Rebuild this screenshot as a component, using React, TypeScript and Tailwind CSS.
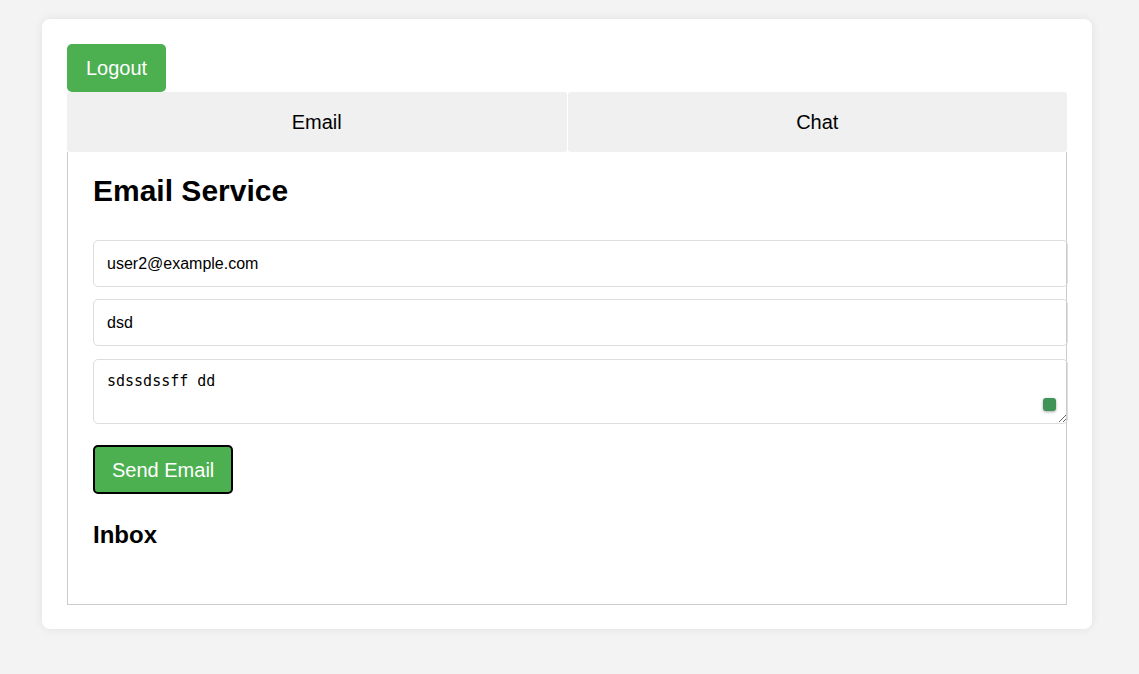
import { useState } from "react";

export default function App() {
  const [tab, setTab] = useState("email");
  const [to, setTo] = useState("user2@example.com");
  const [subject, setSubject] = useState("dsd");
  const [body, setBody] = useState("sdssdssff dd");

  return (
    <div className="min-h-[674px] bg-[#f3f3f3] pt-[19px] font-['Liberation_Sans',Arial,sans-serif] text-black">
      <div className="ml-[42px] w-[1050px] rounded-lg bg-white px-[25px] pt-[25px] pb-[24px] shadow-[0_0_10px_rgba(0,0,0,0.08)]">
        {/* Top: logout */}
        <button className="h-[48px] rounded-[5px] bg-[#4caf50] px-[19px] text-[20px] leading-[23px] text-white">
          Logout
        </button>

        {/* Tabs */}
        <div className="flex gap-px">
          <button
            onClick={() => setTab("email")}
            className="h-[60px] flex-1 rounded-[3px] bg-[#f0f0f0] text-[20px]"
          >
            Email
          </button>
          <button
            onClick={() => setTab("chat")}
            className="h-[60px] flex-1 rounded-[3px] bg-[#f0f0f0] text-[20px]"
          >
            Chat
          </button>
        </div>

        {/* Panel */}
        <div className="border border-t-0 border-[#cccccc] px-[25px] pt-[22px] pb-[55px]">
          {tab === "email" ? (
            <>
              <h2 className="mb-[32px] text-[30px] font-bold leading-[34px]">Email Service</h2>
              <div className="flex flex-col">
                <input
                  value={to}
                  onChange={(e) => setTo(e.target.value)}
                  className="h-[47px] w-[975px] rounded-[5px] border border-[#dddddd] px-[13px] text-[16px] outline-none"
                />
                <input
                  value={subject}
                  onChange={(e) => setSubject(e.target.value)}
                  className="mt-[12px] h-[47px] w-[975px] rounded-[5px] border border-[#dddddd] px-[13px] text-[16px] outline-none"
                />
                <div className="relative mt-[13px] w-[975px]">
                  <textarea
                    value={body}
                    onChange={(e) => setBody(e.target.value)}
                    className="block h-[65px] w-[975px] rounded-[5px] border border-[#dddddd] px-[13px] pt-[12px] pb-[10px] font-['DejaVu_Sans_Mono',monospace] text-[15px] leading-[18px] outline-none"
                  />
                  <span className="absolute right-[12px] bottom-[13px] h-[13px] w-[13px] rounded-[3px] bg-[#3f9356] shadow-[0_1px_3px_rgba(0,0,0,0.35)]" />
                </div>
              </div>
              <button className="mt-[21px] h-[49px] rounded-[5px] border-2 border-black bg-[#4caf50] px-[17px] text-[20px] text-white">
                Send Email
              </button>
              <h3 className="mt-[27px] text-[24px] font-bold leading-[28px]">Inbox</h3>
            </>
          ) : (
            <h2 className="text-[30px] font-bold leading-[34px]">Chat</h2>
          )}
        </div>
      </div>
    </div>
  );
}
